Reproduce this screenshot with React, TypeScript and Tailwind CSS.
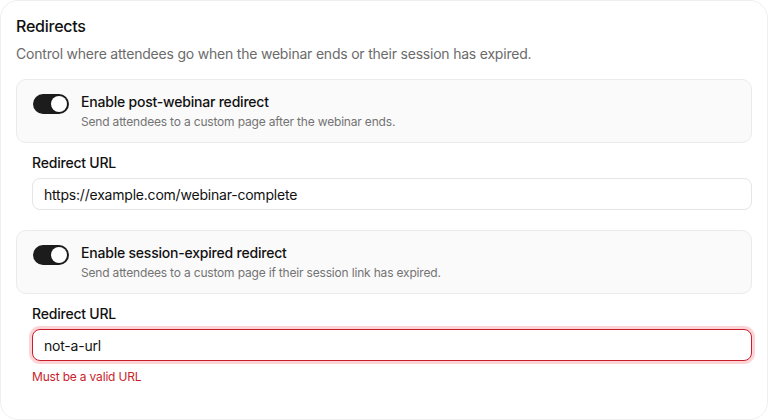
import React from 'react'

function Toggle({ on }: { on: boolean }) {
    return (
        <button
            type="button"
            role="switch"
            aria-checked={on}
            className={
                'relative mt-[2px] inline-flex h-5 w-9 shrink-0 items-center rounded-full p-[2px] ' +
                (on ? 'justify-end bg-[#1c1c1c]' : 'justify-start bg-[#d4d4d4]')
            }
        >
            <span className="block h-4 w-4 rounded-full bg-white shadow-sm" />
        </button>
    )
}

function RedirectOption({ title, description }: { title: string; description: string }) {
    return (
        <div className="flex items-start gap-3 rounded-[10px] border border-[#ebebeb] bg-[#fafafa] px-4 py-3">
            <Toggle on />
            <div>
                <p className="text-sm font-medium leading-5 tracking-[-0.015em] text-[#111]">{title}</p>
                <p className="mt-[2px] text-xs leading-4 tracking-[-0.015em] text-[#737373]">{description}</p>
            </div>
        </div>
    )
}

function UrlField({ value, error }: { value: string; error?: string }) {
    return (
        <div className="mt-2.5 pl-4">
            <label className="block text-sm font-medium leading-5 tracking-[-0.015em] text-[#111]">
                Redirect URL
            </label>
            <input
                readOnly
                value={value}
                className={
                    'mt-[5px] block h-8 w-full rounded-lg border bg-white px-[11px] text-sm tracking-[-0.015em] text-[#111] outline-none ' +
                    (error
                        ? 'border-[#c81e2b] ring-[3px] ring-[#fcd4d6]'
                        : 'border-[#e5e5e5]')
                }
            />
            {error && (
                <p className="mt-2 text-xs leading-4 tracking-[-0.015em] text-[#c81e2b]">{error}</p>
            )}
        </div>
    )
}

export default function App() {
    return (
        <div className="h-[420px] w-[768px] bg-white font-['Inter',sans-serif]">
            <div className="h-full w-full rounded-[18px] border border-[#efefef] bg-white px-[15px] pt-[13px]">
                <h2 className="text-base font-medium leading-6 tracking-[-0.015em] text-[#111]">Redirects</h2>
                <p className="mt-[6px] text-sm leading-5 tracking-[-0.015em] text-[#6b6b6b]">
                    Control where attendees go when the webinar ends or their session has expired.
                </p>

                <div className="mt-[15px]">
                    <RedirectOption
                        title="Enable post-webinar redirect"
                        description="Send attendees to a custom page after the webinar ends."
                    />
                    <UrlField value="https://example.com/webinar-complete" />
                </div>

                <div className="mt-5">
                    <RedirectOption
                        title="Enable session-expired redirect"
                        description="Send attendees to a custom page if their session link has expired."
                    />
                    <UrlField value="not-a-url" error="Must be a valid URL" />
                </div>
            </div>
        </div>
    )
}
